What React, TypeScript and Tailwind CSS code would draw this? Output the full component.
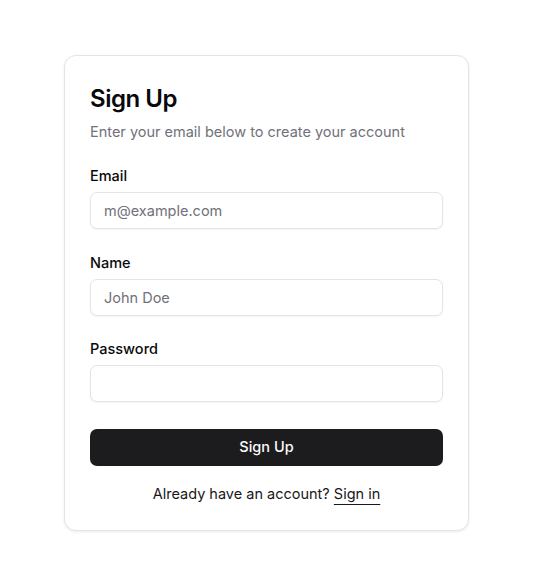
export default function App() {
  return (
    <div
      className="min-h-screen w-full bg-white pt-[55px] pl-[64px]"
      style={{ fontFamily: "Inter, 'Noto Sans', sans-serif" }}
    >
      <div className="w-[405px] rounded-[12px] border border-[#e4e4e7] bg-white px-[25px] pt-[27px] pb-[26px] shadow-[0_1px_3px_rgba(0,0,0,0.08)]">
        <h1 className="text-[24px] leading-[32px] font-semibold tracking-[-0.02em] text-[#09090b]">Sign Up</h1>
        <p className="mt-[7px] text-[14.5px] leading-[20px] text-[#71717a]">
          Enter your email below to create your account
        </p>

        <form className="mt-[24px] flex flex-col gap-[23.5px]" onSubmit={(e) => e.preventDefault()}>
          <Field label="Email" placeholder="m@example.com" type="email" />
          <Field label="Name" placeholder="John Doe" type="text" />
          <Field label="Password" placeholder="" type="password" />

          <button
            type="submit"
            className="mt-[3px] h-[37px] w-full rounded-[7px] bg-[#1c1c1e] text-[14.5px] font-medium text-[#fafafa]"
          >
            Sign Up
          </button>
        </form>

        <p className="mt-[18px] text-center text-[14.5px] leading-[20px] text-[#18181b]">
          Already have an account?{" "}
          <a href="#" className="underline underline-offset-[5px] decoration-1">
            Sign in
          </a>
        </p>
      </div>
    </div>
  );
}

function Field({ label, placeholder, type }: { label: string; placeholder: string; type: string }) {
  return (
    <div className="flex flex-col gap-[6px]">
      <label className="text-[14.5px] leading-[20px] font-medium text-[#09090b]">{label}</label>
      <input
        type={type}
        placeholder={placeholder}
        className="h-[37px] w-full rounded-[7px] border border-[#e4e4e7] bg-white px-[13px] text-[14.5px] text-[#09090b] shadow-[0_1px_2px_rgba(0,0,0,0.05)] outline-none placeholder:text-[#71717a]"
      />
    </div>
  );
}
